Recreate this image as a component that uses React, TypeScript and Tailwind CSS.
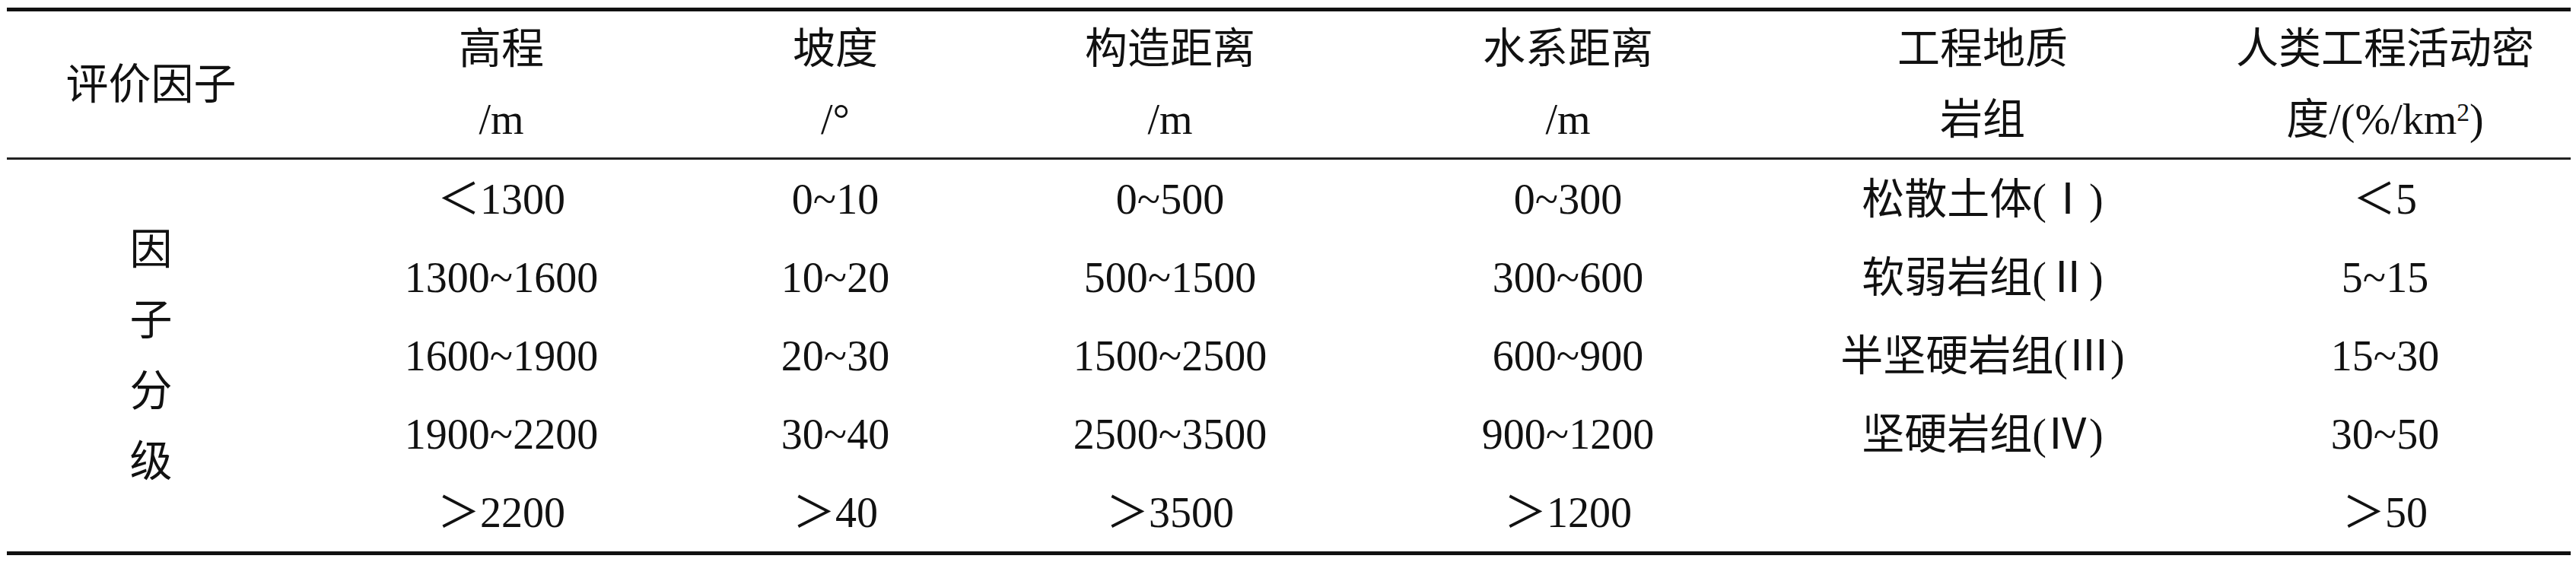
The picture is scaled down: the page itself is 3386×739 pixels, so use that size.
const COLS = "grid grid-cols-[379px_542px_336px_544px_502px_588px_479px]";

const HEAD: [string, React.ReactNode][] = [
  ["高程", "/m"],
  ["坡度", "/°"],
  ["构造距离", "/m"],
  ["水系距离", "/m"],
  ["工程地质", "岩组"],
  [
    "人类工程活动密",
    <>
      度/(%/km<sup className="text-[0.6em] leading-none">2</sup>)
    </>,
  ],
];

const ROWS = [
  ["＜1300", "0~10", "0~500", "0~300", "松散土体(Ⅰ)", "＜5"],
  ["1300~1600", "10~20", "500~1500", "300~600", "软弱岩组(Ⅱ)", "5~15"],
  ["1600~1900", "20~30", "1500~2500", "600~900", "半坚硬岩组(Ⅲ)", "15~30"],
  ["1900~2200", "30~40", "2500~3500", "900~1200", "坚硬岩组(Ⅳ)", "30~50"],
  ["＞2200", "＞40", "＞3500", "＞1200", "", "＞50"],
];

export default function App() {
  return (
    <div
      className="w-[3386px] h-[739px] bg-white pt-[10px] pl-[9px] text-[56px] text-[#111]"
      style={{ fontFamily: '"Liberation Serif", "Noto Sans CJK SC", serif' }}
    >
      <div className="w-[3370px] border-t-[5px] border-b-[5px] border-[#111]">
        {/* header */}
        <div className={`${COLS} h-[195px] border-b-[3px] border-[#222]`}>
          <div className="flex items-center justify-center">评价因子</div>
          {HEAD.map(([a, b], i) => (
            <div
              key={i}
              className={`flex flex-col items-center pt-[3px] whitespace-nowrap ${i === 5 ? "pr-[9px]" : ""}`}
            >
              <div className="h-[93px] leading-[93px]">{a}</div>
              <div className="h-[93px] leading-[93px]">{b}</div>
            </div>
          ))}
        </div>

        {/* body */}
        <div className={`${COLS} grid-rows-[repeat(5,103px)]`}>
          <div className="row-span-5 flex flex-col items-center justify-center">
            {["因", "子", "分", "级"].map((c) => (
              <div key={c} className="h-[93px] leading-[93px]">
                {c}
              </div>
            ))}
          </div>
          {ROWS.map((row, r) =>
            row.map((cell, c) => (
              <div
                key={`${r}-${c}`}
                className={`flex items-center justify-center whitespace-nowrap leading-none ${c === 5 ? "pr-[9px]" : ""}`}
              >
                {cell}
              </div>
            ))
          )}
        </div>
      </div>
    </div>
  );
}
